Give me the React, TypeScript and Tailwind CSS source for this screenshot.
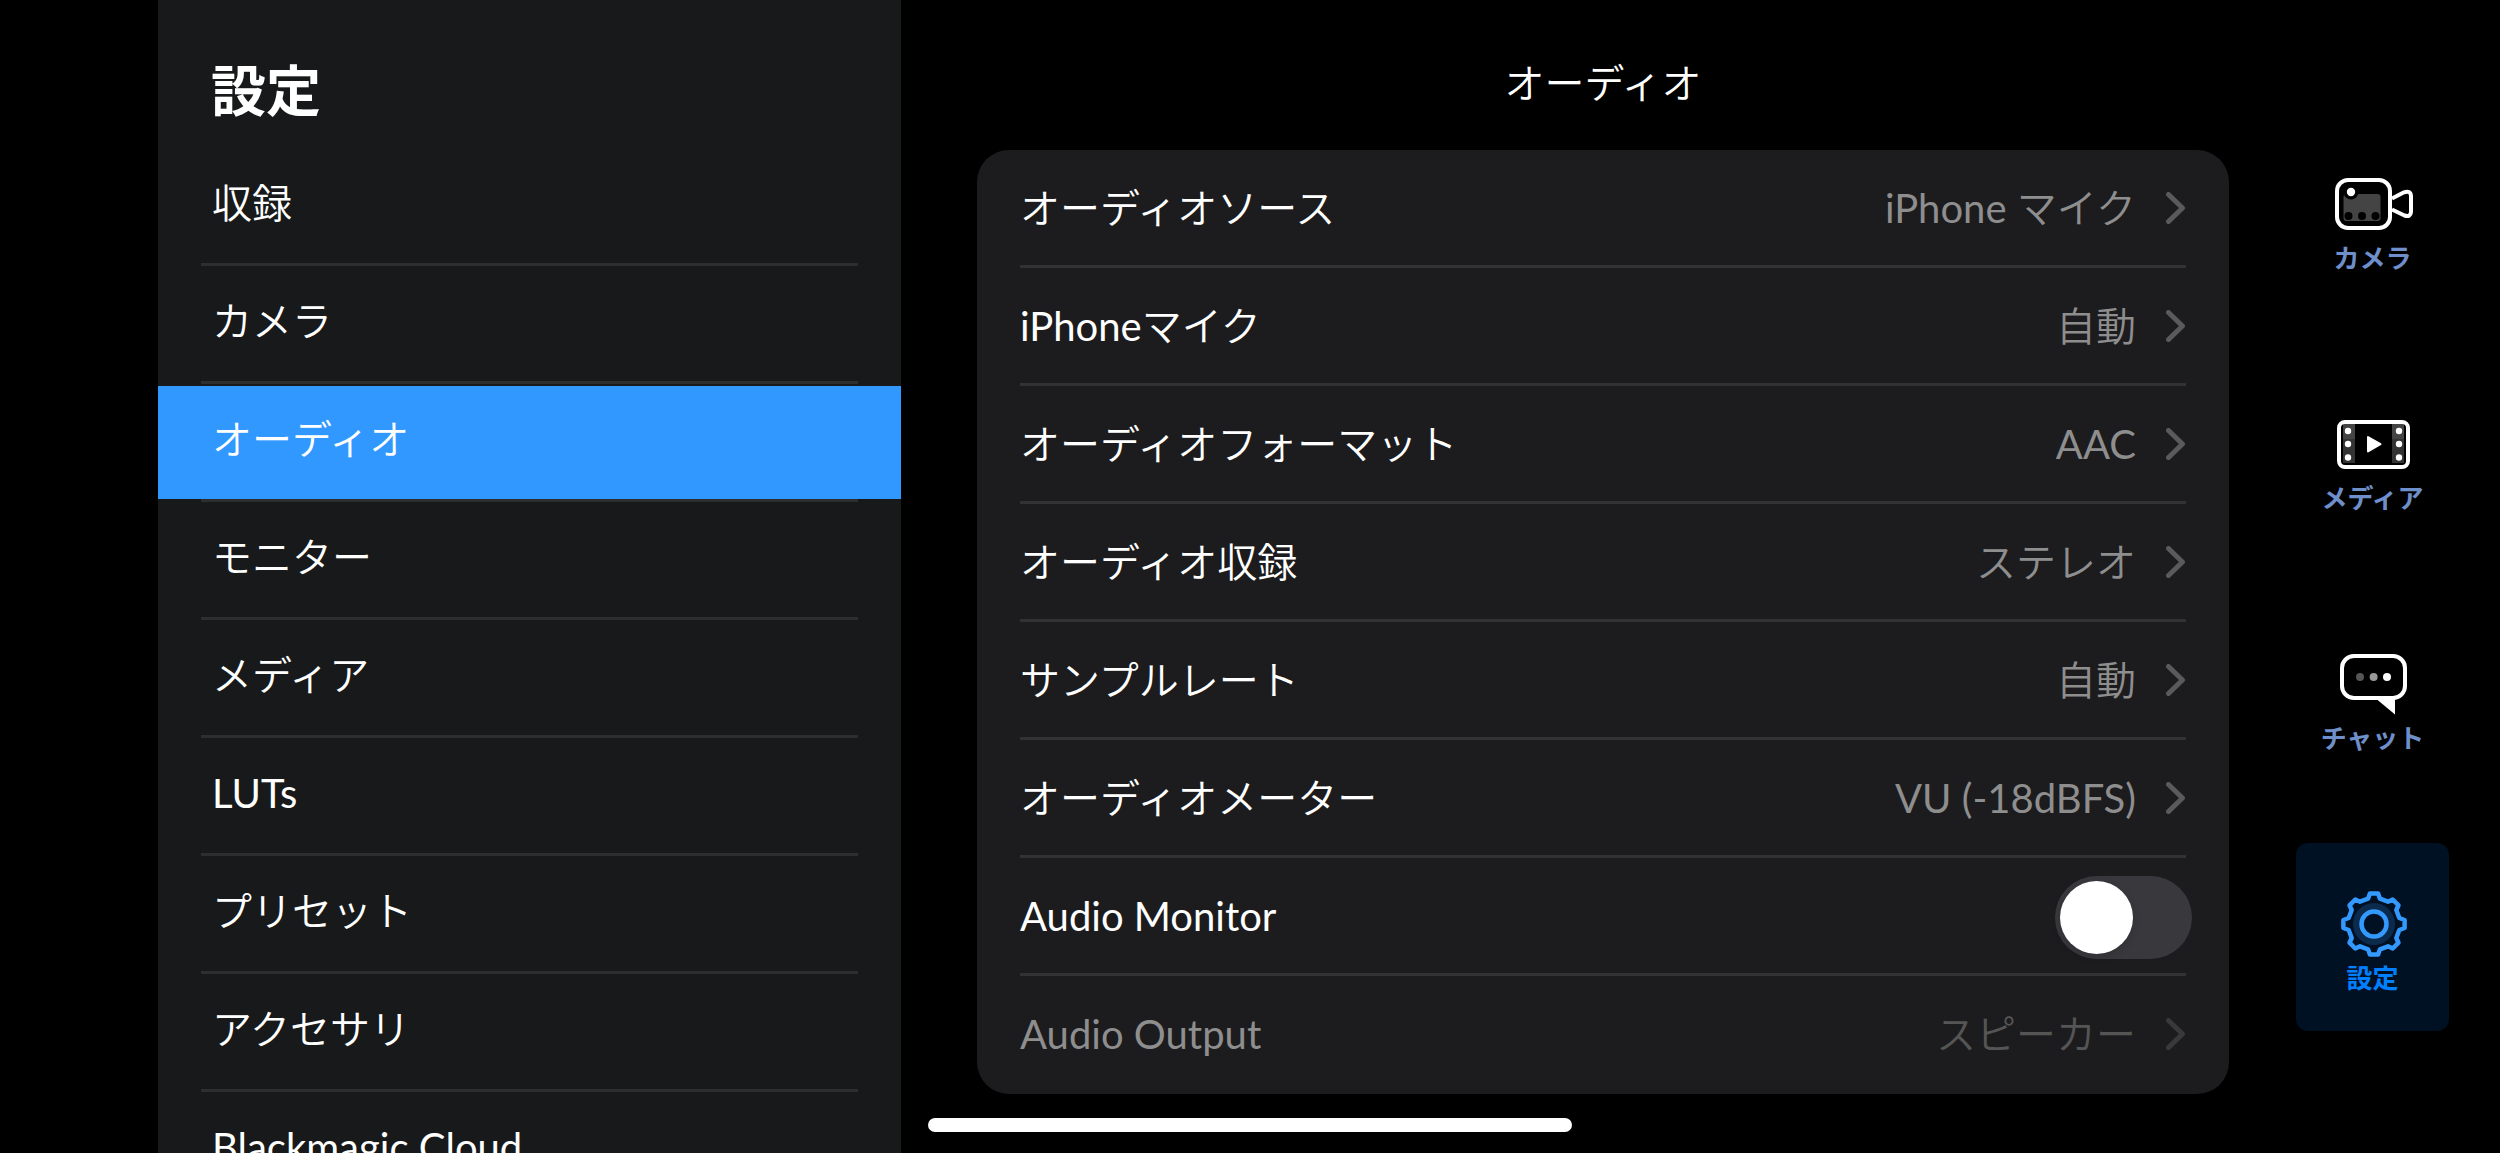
import { useState, type ReactNode } from "react";

const sidebarItems = [
  "収録",
  "カメラ",
  "オーディオ",
  "モニター",
  "メディア",
  "LUTs",
  "プリセット",
  "アクセサリ",
  "Blackmagic Cloud",
];

type Row = { label: string; value?: string; toggle?: boolean; disabled?: boolean };

const rows: Row[] = [
  { label: "オーディオソース", value: "iPhone マイク" },
  { label: "iPhoneマイク", value: "自動" },
  { label: "オーディオフォーマット", value: "AAC" },
  { label: "オーディオ収録", value: "ステレオ" },
  { label: "サンプルレート", value: "自動" },
  { label: "オーディオメーター", value: "VU (-18dBFS)" },
  { label: "Audio Monitor", toggle: true },
  { label: "Audio Output", value: "スピーカー", disabled: true },
];

function Chevron() {
  return (
    <svg className="h-8 w-5 shrink-0" viewBox="0 0 20 32" fill="none" stroke="currentColor" strokeWidth="5" strokeLinecap="round" strokeLinejoin="round" aria-hidden="true">
      <path d="M2.500 2.500 16.500 16 2.500 29.500" />
    </svg>
  );
}

function CameraIcon() {
  return (
    <svg width="78" height="52" viewBox="0 0 78 52" fill="none" aria-hidden="true">
      <rect x="2" y="2" width="53" height="48" rx="11" stroke="#fff" strokeWidth="4" />
      <rect x="8.5" y="16" width="37" height="27" rx="3" fill="#444" />
      <circle cx="16" cy="14" r="7.5" fill="#000" />
      <circle cx="16" cy="14" r="4.2" fill="#fff" />
      <circle cx="13.5" cy="38" r="4" fill="#000" />
      <circle cx="27" cy="38" r="4" fill="#000" />
      <circle cx="40.5" cy="38" r="4" fill="#000" />
      <path d="M57 20.500 69 14.300Q75.500 12 76 18V34Q75.500 39.500 69.500 37.500L57 31.500" stroke="#fff" strokeWidth="4" strokeLinejoin="round" />
    </svg>
  );
}

function MediaIcon() {
  return (
    <svg width="73" height="49" viewBox="0 0 73 49" fill="none" aria-hidden="true">
      <path d="M6 4H18V19H6ZM55 4H67V19H55Z" fill="#444" />
      <path d="M6 19H18V43H6ZM55 19H67V43H55Z" fill="#333" />
      <rect x="2" y="2" width="69" height="45" rx="6" stroke="#fff" strokeWidth="4" />
      {[11, 62].map((x) =>
        [11, 24, 37.5].map((y) => <circle key={`${x}-${y}`} cx={x} cy={y} r="3.2" fill="#fff" />),
      )}
      <path d="M31 17V31.500L43.500 24.200Z" fill="#fff" stroke="#fff" strokeWidth="2" strokeLinejoin="round" />
    </svg>
  );
}

function ChatIcon() {
  return (
    <svg width="67" height="61" viewBox="0 0 67 61" fill="none" aria-hidden="true">
      <rect x="2" y="2" width="63" height="42" rx="12" stroke="#fff" strokeWidth="4" />
      <path d="M37 45.500 55 60.500V43Z" fill="#fff" />
      <circle cx="20" cy="23" r="4" fill="#555" />
      <circle cx="33.600" cy="23" r="4" fill="#999" />
      <circle cx="47" cy="23" r="4" fill="#fff" />
    </svg>
  );
}

function GearIcon() {
  return (
    <svg width="66" height="66" viewBox="-33 -33 66 66" fill="none" aria-hidden="true">
      <circle r="21" fill="#0c2a4b" />
      <circle r="12.500" fill="#001124" stroke="#3399ff" strokeWidth="4.500" />
      <path
        d="M-4-30.600 4-30.600 6-25.300 14-22.300 18.700-24.500 24.500-18.700 22.300-14 25.300-6 30.600-4 30.600 4 25.300 6 22.300 14 24.500 18.700 18.700 24.500 14 22.300 6 25.300 4 30.600-4 30.600-6 25.300-14 22.300-18.700 24.500-24.500 18.700-22.300 14-25.300 6-30.600 4-30.600-4-25.300-6-22.300-14-24.500-18.700-18.700-24.500-14-22.300-6-25.300Z"
        stroke="#3399ff"
        strokeWidth="4.500"
        strokeLinejoin="round"
      />
    </svg>
  );
}

const navItems: { label: string; icon: ReactNode }[] = [
  { label: "カメラ", icon: <CameraIcon /> },
  { label: "メディア", icon: <MediaIcon /> },
  { label: "チャット", icon: <ChatIcon /> },
  { label: "設定", icon: <GearIcon /> },
];

function SettingRow({ row }: { row: Row }) {
  const [on, setOn] = useState(false);
  const frame = "flex h-full w-full items-center justify-between";

  if (row.toggle) {
    return (
      <label className={`${frame} text-white`}>
        <span>{row.label}</span>
        <span className="relative mt-1 -mr-1.5 h-[83px] w-[137px]">
          <input
            type="checkbox"
            role="switch"
            checked={on}
            onChange={(e) => setOn(e.target.checked)}
            className="peer block h-full w-full appearance-none rounded-full bg-[#39393d] checked:bg-[#34c759]"
          />
          <span className="pointer-events-none absolute top-[5px] left-[5px] size-[73px] rounded-full bg-white shadow-[0_3px_8px_rgba(0,0,0,0.15)] peer-checked:translate-x-[54px]" />
        </span>
      </label>
    );
  }

  return (
    <button type="button" disabled={row.disabled} className={frame}>
      <span className={row.disabled ? "text-[#8e8e8e]" : "text-white"}>{row.label}</span>
      <span className={`flex items-center gap-[30px] ${row.disabled ? "text-[#555]" : "text-[#8e8e8f]"}`}>
        {row.value}
        <span className={row.disabled ? "text-[#39393b]" : "text-[#5a5a5d]"}>
          <Chevron />
        </span>
      </span>
    </button>
  );
}

export default function App() {
  return (
    <div className="grid h-screen grid-cols-[158px_minmax(0,743fr)_minmax(0,1395fr)_204px] overflow-hidden bg-black font-['Lato','Noto_Sans_CJK_JP_DemiLight','Noto_Sans_CJK_JP',sans-serif] text-[40px] leading-[56px] text-white">
      <aside className="col-start-2 overflow-hidden bg-[#18191a]">
        <h1 className="flex h-[148px] items-center px-[53px] pt-[26px] font-['Noto_Sans_CJK_JP',sans-serif] text-[55px] leading-[80px] font-bold">設定</h1>
        <ul>
          {sidebarItems.map((item) => (
            <li key={item} className="flex h-[118px] flex-col pt-[2px]">
              <button
                type="button"
                className={
                  item === "オーディオ"
                    ? "flex-1 bg-[#3198ff] px-[54px] pb-2 text-left"
                    : "flex-1 px-[54px] pb-2 text-left"
                }
              >
                {item}
              </button>
              <div className="mx-[43px] h-[3px] bg-[#2d2e30]" />
            </li>
          ))}
        </ul>
      </aside>

      <main className="pr-[67px] pl-[76px]">
        <h2 className="flex h-[150px] items-center justify-center pt-4">オーディオ</h2>
        <ul className="rounded-[32px] bg-[#1c1c1e] px-[43px]">
          {rows.map((row) => (
            <li key={row.label} className="h-[118px] border-b-[3px] border-[#323234] last:border-transparent">
              <SettingRow row={row} />
            </li>
          ))}
        </ul>
      </main>

      <nav className="flex flex-col gap-[52px] pt-[123px] pr-[51px]">
        {navItems.map(({ label, icon }) => {
          const active = label === "設定";
          return (
            <button
              key={label}
              type="button"
              className={
                active
                  ? "flex h-[188px] flex-col items-center rounded-xl bg-[#001124] pt-12 text-[#0080ff]"
                  : "flex h-[188px] flex-col items-center rounded-xl pt-12 text-[#6e8fca]"
              }
            >
              <span className="flex h-[66px] items-center pl-[2px]">{icon}</span>
              <span className="font-['Noto_Sans_CJK_JP',sans-serif] text-[26px] leading-[40px] font-bold">{label}</span>
            </button>
          );
        })}
      </nav>

      <div className="fixed bottom-[21px] left-1/2 h-[14px] w-[644px] -translate-x-1/2 rounded-full bg-white" />
    </div>
  );
}
